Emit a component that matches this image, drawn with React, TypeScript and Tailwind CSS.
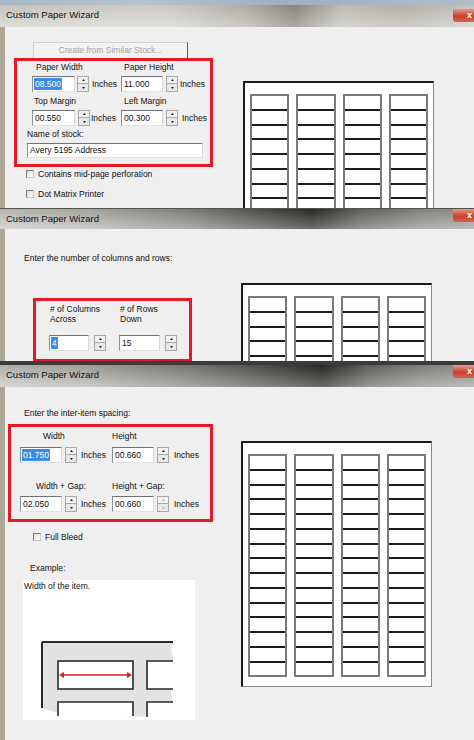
import React from 'react';

const FONT = { fontFamily: '"Liberation Sans", Arial, sans-serif' };

type TitleProps = { variant: 1 | 2 | 3 };

function TitleBar({ variant }: TitleProps) {
  const bg =
    variant === 1
      ? 'h-[22px] bg-[linear-gradient(to_bottom,rgba(0,0,0,0.06),rgba(255,255,255,0.25)),linear-gradient(to_right,#d2d0ca_0%,#d8d6d0_35%,#b9b6ae_52%,#8f8c84_62%,#c9c6bf_72%,#bdbab2_85%,#cfcdc7_100%)]'
      : variant === 2
      ? 'h-[20px] bg-[linear-gradient(to_bottom,rgba(0,0,0,0.1),rgba(255,255,255,0.3)),linear-gradient(to_right,#c9c8c3_0%,#b8b7b1_18%,#8a8983_40%,#4a4945_58%,#2e2d2a_66%,#6a6964_76%,#8e8d88_88%,#a3a29d_100%)]'
      : 'h-[26px] border-t-[4px] border-[#3b3b38] bg-[linear-gradient(to_bottom,rgba(0,0,0,0.12),rgba(255,255,255,0.3)),linear-gradient(to_right,#c6c5c0_0%,#b4b3ad_18%,#85847e_40%,#4d4c48_58%,#2c2b28_68%,#6d6c67_78%,#8d8c87_88%,#a2a19c_100%)]';
  const closeTop = variant === 1 ? 'mt-[4px]' : 'mt-0';
  return (
    <div className={`flex items-start justify-between ${bg}`}>
      <div className="pl-[6px] text-[9.5px] leading-[20px] text-[#111]">Custom Paper Wizard</div>
      <div
        className={`${closeTop} flex h-[13px] w-[21px] items-center justify-end rounded-bl-[3px] bg-[linear-gradient(to_bottom,#e9988e,#c9402f_55%,#d8624f)] pr-[2px] text-[9px] font-bold leading-none text-white`}
      >
        x
      </div>
    </div>
  );
}

function Spinner({ disabled = false }: { disabled?: boolean }) {
  const arrow = disabled ? '#b8b8b8' : '#222';
  return (
    <div className="flex h-[16px] w-[12px] flex-col">
      <div className="flex h-[8px] items-center justify-center border border-[#a8a8a8] bg-[#f2f2f2]">
        <svg width="3" height="2" viewBox="0 0 3 2">
          <path d="M0 2 L1.5 0 L3 2 Z" fill={arrow} />
        </svg>
      </div>
      <div className="flex h-[8px] items-center justify-center border border-t-0 border-[#a8a8a8] bg-[#e8e8e8]">
        <svg width="3" height="2" viewBox="0 0 3 2">
          <path d="M0 0 L1.5 2 L3 0 Z" fill={arrow} />
        </svg>
      </div>
    </div>
  );
}

function TextBox({
  value,
  selected = false,
  w,
  h = 'h-[16px]',
}: {
  value: string;
  selected?: boolean;
  w: string;
  h?: string;
}) {
  return (
    <div
      className={`${w} ${h} flex items-center border border-t-[#6f7378] border-l-[#8d9096] border-r-[#d8d8d8] border-b-[#e2e2e2] bg-white pl-[1px] text-[8.5px] text-[#111]`}
    >
      {selected ? <span className="bg-[#3a8de0] px-[1px] text-white">{value}</span> : <span className="px-[1px]">{value}</span>}
    </div>
  );
}

function Field({
  value,
  selected,
  w,
  spinGap,
  inchGap,
  inches = true,
  disabled,
}: {
  value: string;
  selected?: boolean;
  w: string;
  spinGap: string;
  inchGap: string;
  inches?: boolean;
  disabled?: boolean;
}) {
  return (
    <div className="flex items-center">
      <TextBox value={value} selected={selected} w={w} />
      <div className={spinGap}>
        <Spinner disabled={disabled} />
      </div>
      {inches && <span className={`${inchGap} text-[8.5px] text-[#111]`}>Inches</span>}
    </div>
  );
}

function CheckRow({ label, ml, mt }: { label: string; ml: string; mt: string }) {
  return (
    <div className={`flex h-[10px] items-center ${ml} ${mt}`}>
      <div className="h-[8px] w-[8px] border border-t-[#7a7a7a] border-l-[#7a7a7a] border-r-[#c9c9c9] border-b-[#c9c9c9] bg-[linear-gradient(135deg,#dcdcdc,#ffffff)]" />
      <span className="ml-[4px] text-[8.5px] text-[#111]">{label}</span>
    </div>
  );
}

function SheetPreview({ rows, h, mt, ml }: { rows: number; h: string; mt: string; ml: string }) {
  return (
    <div className={`${mt} ${ml} ${h} w-[191px] shrink-0 border-l-2 border-t-2 border-l-[#1a1a1a] border-t-[#1a1a1a] border-r border-b border-r-[#8a8a8a] border-b-[#8a8a8a] bg-white px-[5px] pt-[11px]`}>
      <div className="grid grid-cols-4 gap-[7px]">
        {[0, 1, 2, 3].map((c) => (
          <div key={c} className="flex flex-col border-x-2 border-x-[#7a7a7a] border-b-2 border-b-[#7a7a7a]">
            {Array.from({ length: rows }).map((_, r) => (
              <div
                key={r}
                className={`h-[14.75px] border-t-2 ${r === 0 ? 'border-t-[#7a7a7a]' : 'border-t-[#1c1c1c]'}`}
              />
            ))}
          </div>
        ))}
      </div>
    </div>
  );
}

function Label({ text, className = '' }: { text: string; className?: string }) {
  return <div className={`h-[10px] text-[8.5px] leading-[10px] text-[#111] ${className}`}>{text}</div>;
}

function PanelOne() {
  return (
    <div>
      <div className="h-[5px] bg-[linear-gradient(to_right,#a7b8c6,#b4c3cf_30%,#9eb0bf_60%,#aebfcb)]" />
      <TitleBar variant={1} />
      <div className="flex h-[181px] overflow-hidden border-l-[5px] border-l-[#aca797] bg-[#efefef]">
        <div className="w-[230px] shrink-0">
          <div className="ml-[28px] mt-[15px] flex h-[17px] w-[155px] items-center justify-center border border-[#d0d0d0] border-r-[#5a5a5a] bg-[#f2f2f2] text-[8.5px] text-[#a3a3a3]">
            Create from Similar Stock...
          </div>
          <div className="ml-[9px] -mt-[1px] h-[109px] w-[199px] border-[3px] border-[#e11a24] pt-[1px]">
            <div className="flex">
              <div className="ml-[15px] w-[89px]">
                <Label text="Paper Width" className="ml-[4px]" />
                <div className="mt-[4px]">
                  <Field value="08.500" selected w="w-[43px]" spinGap="ml-[2px]" inchGap="ml-[3px]" />
                </div>
                <Label text="Top Margin" className="ml-[2px] mt-[4px]" />
                <div className="mt-[4px]">
                  <Field value="00.550" w="w-[43px]" spinGap="ml-[3px]" inchGap="ml-[1px]" />
                </div>
              </div>
              <div>
                <Label text="Paper Height" className="ml-[3px]" />
                <div className="mt-[4px]">
                  <Field value="11.000" w="w-[42px]" spinGap="ml-[3px]" inchGap="ml-[2px]" />
                </div>
                <Label text="Left Margin" className="ml-[3px] mt-[4px]" />
                <div className="mt-[4px]">
                  <Field value="00.300" w="w-[42px]" spinGap="ml-[3px]" inchGap="ml-[4px]" />
                </div>
              </div>
            </div>
            <Label text="Name of stock:" className="ml-[10px] mt-[3px]" />
            <div className="ml-[10px] mt-[4px]">
              <TextBox value="Avery 5195 Address" w="w-[176px]" h="h-[15px]" />
            </div>
          </div>
          <CheckRow label="Contains mid-page perforation" ml="ml-[21px]" mt="mt-[2px]" />
          <CheckRow label="Dot Matrix Printer" ml="ml-[21px]" mt="mt-[10px]" />
        </div>
        <SheetPreview rows={10} h="h-[200px]" mt="mt-[54px]" ml="ml-[8px]" />
      </div>
    </div>
  );
}

function PanelTwo() {
  return (
    <div>
      <div className="h-[1px] bg-[#55534d]" />
      <TitleBar variant={2} />
      <div className="flex h-[132px] overflow-hidden border-l-[5px] border-l-[#aca797] bg-[#efefef]">
        <div className="w-[230px] shrink-0">
          <Label text="Enter the number of columns and rows:" className="ml-[19px] mt-[24px]" />
          <div className="ml-[28px] mt-[35px] h-[64px] w-[159px] border-[3px] border-[#e11a24] pt-[3px]">
            <div className="flex">
              <div className="ml-[13px] w-[70px]">
                <Label text="# of Columns" className="ml-[1px]" />
                <Label text="Across" className="ml-[1px]" />
                <div className="mt-[11px]">
                  <Field value="4" selected w="w-[40px]" spinGap="ml-[5px]" inchGap="" inches={false} />
                </div>
              </div>
              <div>
                <Label text="# of Rows" className="ml-[1px]" />
                <Label text="Down" className="ml-[1px]" />
                <div className="mt-[11px]">
                  <Field value="15" w="w-[41px]" spinGap="ml-[5px]" inchGap="" inches={false} />
                </div>
              </div>
            </div>
          </div>
        </div>
        <SheetPreview rows={6} h="h-[120px]" mt="mt-[54px]" ml="ml-[6px]" />
      </div>
    </div>
  );
}

// small diagram: corner of a label sheet with the item width marked in red
function ExampleDrawing() {
  return (
    <svg width="172" height="122" viewBox="0 0 172 122">
      <path d="M19 45 L150 45 L148 52 L150 60 L147 70 L150 80 L148 95 L150 110 L150 119 L40 117 L19 110 Z" fill="#e2e2e2" />
      <path d="M19 44 L150 44" stroke="#2a2a2a" strokeWidth="2" />
      <path d="M19 44 L19 110" stroke="#2a2a2a" strokeWidth="2" />
      <rect x="35" y="63" width="75" height="28" fill="#ffffff" stroke="#2a2a2a" strokeWidth="1.6" />
      <rect x="124" y="63" width="26" height="28" fill="#ffffff" />
      <path d="M150 63 L124 63 L124 91 L150 91" fill="none" stroke="#2a2a2a" strokeWidth="1.6" />
      <rect x="35" y="104" width="75" height="14" fill="#ffffff" />
      <path d="M35 118 L35 104 L110 104 L110 118" fill="none" stroke="#2a2a2a" strokeWidth="1.6" />
      <rect x="124" y="104" width="26" height="15" fill="#ffffff" />
      <path d="M150 104 L124 104 L124 119" fill="none" stroke="#2a2a2a" strokeWidth="1.6" />
      <path d="M38 77 L107 77" stroke="#e01b1b" strokeWidth="1.6" />
      <path d="M36 77 L41 74 L41 80 Z" fill="#e01b1b" />
      <path d="M109 77 L104 74 L104 80 Z" fill="#e01b1b" />
    </svg>
  );
}

function PanelThree() {
  return (
    <div>
      <TitleBar variant={3} />
      <div className="flex h-[353px] overflow-hidden border-l-[5px] border-l-[#aca797] bg-[#efefef]">
        <div className="w-[230px] shrink-0">
          <Label text="Enter the inter-item spacing:" className="ml-[19px] mt-[21px]" />
          <div className="ml-[3px] mt-[6px] h-[98px] w-[205px] border-[3px] border-[#e11a24] pt-[4px]">
            <div className="flex">
              <div className="ml-[9px] w-[92px]">
                <Label text="Width" className="ml-[23px]" />
                <div className="mt-[6px]">
                  <Field value="01.750" selected w="w-[42px]" spinGap="ml-[3px]" inchGap="ml-[4px]" />
                </div>
                <Label text="Width + Gap:" className="ml-[16px] mt-[18px]" />
                <div className="mt-[5px]">
                  <Field value="02.050" w="w-[42px]" spinGap="ml-[3px]" inchGap="ml-[4px]" />
                </div>
              </div>
              <div>
                <Label text="Height" />
                <div className="mt-[6px]">
                  <Field value="00.660" w="w-[42px]" spinGap="ml-[3px]" inchGap="ml-[5px]" />
                </div>
                <Label text="Height + Gap:" className="mt-[18px]" />
                <div className="mt-[5px]">
                  <Field value="00.660" disabled w="w-[42px]" spinGap="ml-[3px]" inchGap="ml-[5px]" />
                </div>
              </div>
            </div>
          </div>
          <CheckRow label="Full Bleed" ml="ml-[28px]" mt="mt-[10px]" />
          <Label text="Example:" className="ml-[25px] mt-[21px]" />
          <div className="ml-[18px] mt-[7px] h-[140px] w-[172px] overflow-hidden bg-white">
            <div className="pl-[1px] pt-[1px] text-[8.5px] leading-[10px] text-[#111]">Width of the item.</div>
            <div className="mt-[7px]">
              <ExampleDrawing />
            </div>
          </div>
        </div>
        <SheetPreview rows={15} h="h-[246px]" mt="mt-[54px]" ml="ml-[6px]" />
      </div>
    </div>
  );
}

export default function App() {
  return (
    <div className="h-[740px] w-[474px] overflow-hidden bg-[#efefef]" style={FONT}>
      <PanelOne />
      <PanelTwo />
      <PanelThree />
    </div>
  );
}
